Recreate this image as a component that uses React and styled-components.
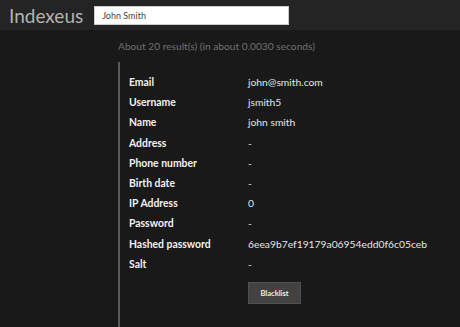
import React from "react";
import styled, { createGlobalStyle } from "styled-components";

const GlobalStyle = createGlobalStyle`
  html, body {
    margin: 0;
    padding: 0;
    background: #191919;
    font-family: Lato, "Open Sans", sans-serif;
  }
`;

const Page = styled.div`
  display: flex;
  flex-direction: column;
  height: 100vh;
  overflow: hidden;
`;

const Header = styled.header`
  display: flex;
  align-items: center;
  flex: none;
  height: 30px;
  padding-left: 9px;
  background: #242424;
`;

const Logo = styled.div`
  font-size: 19px;
  color: #b3b3b3;
  font-weight: 400;
  margin-right: 11px;
`;

const SearchInput = styled.input`
  width: 195px;
  height: 19px;
  box-sizing: border-box;
  border: 1px solid #ccc;
  background: #fff;
  padding: 0 7px;
  font-family: Lato, sans-serif;
  font-size: 9px;
  color: #444;
  outline: none;
`;

const Main = styled.main`
  flex: 1;
  display: flex;
  flex-direction: column;
  padding-left: 118px;
`;

const Stats = styled.div`
  padding-top: 10px;
  height: 22px;
  font-size: 10.2px;
  color: #707070;
`;

const Result = styled.div`
  flex: 1;
  border-left: 2px solid #5a5a5a;
  padding: 10px 0 0 9px;
`;

const Row = styled.div`
  display: grid;
  grid-template-columns: 119px 1fr;
  height: 20.2px;
  align-items: center;
  font-size: 10.4px;
`;

const Label = styled.div`
  font-weight: 700;
  color: #f2f2f2;
`;

const Value = styled.div`
  color: #e6e6e6;
  font-size: 10.3px;
`;

const Actions = styled.div`
  padding-left: 119px;
  padding-top: 6px;
`;

const Button = styled.button`
  width: 53px;
  height: 22px;
  background: #424242;
  border: 1px solid #505050;
  color: #eee;
  font-family: Lato, sans-serif;
  font-weight: 700;
  font-size: 7.5px;
  padding: 0;
`;

const fields = [
  ["Email", "john@smith.com"],
  ["Username", "jsmith5"],
  ["Name", "john smith"],
  ["Address", "-"],
  ["Phone number", "-"],
  ["Birth date", "-"],
  ["IP Address", "0"],
  ["Password", "-"],
  ["Hashed password", "6eea9b7ef19179a06954edd0f6c05ceb"],
  ["Salt", "-"],
];

export default function App() {
  return (
    <Page>
      <GlobalStyle />
      <Header>
        <Logo>Indexeus</Logo>
        <SearchInput defaultValue="John Smith" />
      </Header>
      <Main>
        <Stats>About 20 result(s) (in about 0.0030 seconds)</Stats>
        <Result>
          {fields.map(([k, v]) => (
            <Row key={k}>
              <Label>{k}</Label>
              <Value>{v}</Value>
            </Row>
          ))}
          <Actions>
            <Button>Blacklist</Button>
          </Actions>
        </Result>
      </Main>
    </Page>
  );
}
